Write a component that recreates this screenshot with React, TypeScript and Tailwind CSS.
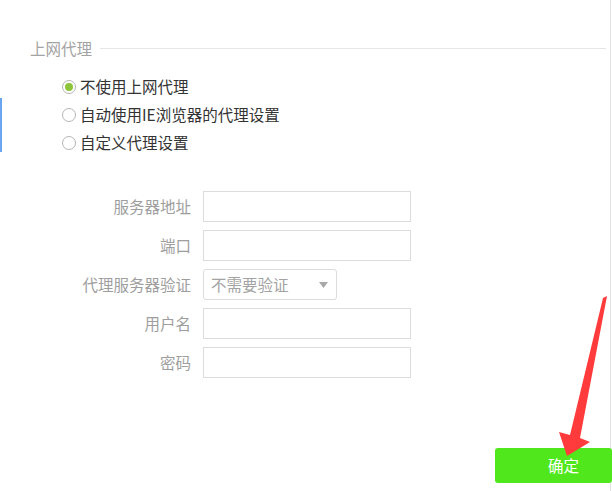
import React from "react";

const font = { fontFamily: '"Noto Sans CJK SC", "Noto Sans", sans-serif' };

const options = ["不使用上网代理", "自动使用IE浏览器的代理设置", "自定义代理设置"];

function Radio({ label, checked }: { label: string; checked?: boolean }) {
  return (
    <label className="flex items-center h-[28px] gap-[4px] text-[15.5px] text-[#333]">
      <span className="w-[14px] h-[14px] rounded-full border border-[#b5b5b5] bg-white flex items-center justify-center">
        {checked && <span className="w-[8px] h-[8px] rounded-full bg-[#8cc43c]" />}
      </span>
      <span>{label}</span>
    </label>
  );
}

function Field({ label, children }: { label: string; children: React.ReactNode }) {
  return (
    <>
      <div className="h-[31px] flex items-center justify-end text-[15.5px] text-[#9e9e9e]">{label}</div>
      <div className="h-[31px] flex items-center">{children}</div>
    </>
  );
}

function TextInput() {
  return <div className="w-[208px] h-[31px] border border-[#dcdcdc] bg-white" />;
}

export default function App() {
  return (
    <div className="relative w-[612px] h-[491px] overflow-hidden bg-white flex" style={font}>
      <div className="w-[3px] shrink-0">
        <div className="mt-[98px] h-[54px] w-[2px] bg-[#6aa6f0]" />
      </div>

      <div className="w-[608px] h-full border-r border-[#e2e2e2] pt-[40px] pl-[27px]">
        <div className="flex items-center h-[16px]">
          <span className="text-[15.5px] leading-[16px] text-[#a3a3a3]">上网代理</span>
          <div className="flex-1 h-px bg-[#e6e6e6] ml-[8px] mr-[4px]" />
        </div>

        <div className="mt-[17px] ml-[32px] flex flex-col">
          {options.map((o, i) => (
            <Radio key={o} label={o} checked={i === 0} />
          ))}
        </div>

        <div className="mt-[34px] grid grid-cols-[161px_auto] gap-x-[12px] gap-y-[8px] justify-start">
          <Field label="服务器地址">
            <TextInput />
          </Field>
          <Field label="端口">
            <TextInput />
          </Field>
          <Field label="代理服务器验证">
            <div className="w-[134px] h-[31px] border border-[#dcdcdc] rounded-[3px] bg-white flex items-center justify-between pl-[7px] pr-[8px] text-[15.5px] text-[#a3a3a3]">
              <span>不需要验证</span>
              <svg width="9" height="6" viewBox="0 0 9 6">
                <path d="M0 0h9L4.5 6z" fill="#a8a8a8" />
              </svg>
            </div>
          </Field>
          <Field label="用户名">
            <TextInput />
          </Field>
          <Field label="密码">
            <TextInput />
          </Field>
        </div>
      </div>

      <button className="absolute left-[495px] top-[448px] w-[117px] h-[35px] rounded-[3px] bg-[#50e81c] text-white text-[15.5px] flex items-center justify-center pl-[20px]">
        确定
      </button>

      <svg className="absolute left-0 top-0 pointer-events-none" width="612" height="491">
        <polygon
          points="603,298 607,296 580,438 590,442 567,456 559,432 570,435"
          fill="#ff3b3b"
        />
      </svg>
    </div>
  );
}
